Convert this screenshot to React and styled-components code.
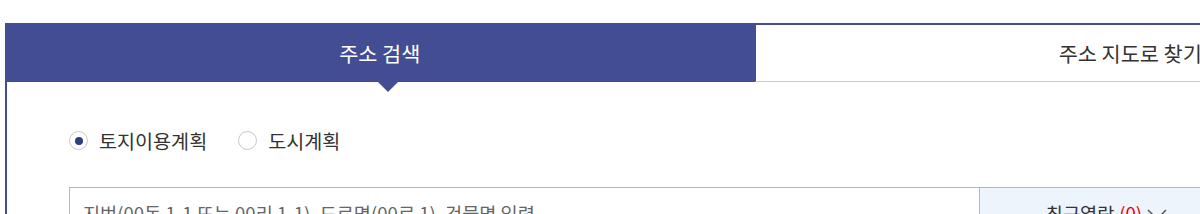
import styled, { createGlobalStyle } from "styled-components";

const GlobalStyle = createGlobalStyle`
	body {
		margin: 0;
		overflow: hidden;
		font-family: "Noto Sans CJK KR", "Noto Sans", sans-serif;
		color: #333;
		background: #fff;
	}
`;

const Page = styled.div`
	padding: 23px 0 0 5px;
`;

const Panel = styled.section`
	width: 1500px;
	border-top: 2px solid #434d93;
	border-left: 2px solid #434d93;
	box-sizing: border-box;
	height: 300px;
`;

const TabList = styled.ul`
	display: flex;
	margin: 0;
	padding: 0;
	list-style: none;
	margin-left: -2px;
`;

const Tab = styled.li`
	position: relative;
	flex: 1;
	height: 57px;
	display: flex;
	align-items: center;
	justify-content: center;
	font-size: 20.8px;
	box-sizing: border-box;
	background: ${(p) => (p.$active ? "#434d93" : "#fff")};
	color: ${(p) => (p.$active ? "#fff" : "#333")};
	border-bottom: 1px solid ${(p) => (p.$active ? "#434d93" : "#ccc")};
	border-left: ${(p) => (p.$active ? "none" : "1px solid #434d93")};

	${(p) =>
		p.$active &&
		`
		&::after {
			content: "";
			position: absolute;
			left: 50%;
			bottom: -11px;
			margin-left: -3px;
			border-left: 11px solid transparent;
			border-right: 11px solid transparent;
			border-top: 11px solid #434d93;
		}
	`}
`;

const Body = styled.div`
	padding: 44px 0 0 62px;
`;

const RadioGroup = styled.div`
	display: flex;
	gap: 31px;
	align-items: center;
`;

const RadioLabel = styled.label`
	display: flex;
	align-items: center;
	gap: 11px;
	font-size: 19.6px;
	color: #333;
`;

const RadioMark = styled.span`
	width: 19px;
	height: 19px;
	border-radius: 50%;
	border: 1px solid #c8c8c8;
	box-sizing: border-box;
	display: flex;
	align-items: center;
	justify-content: center;

	&::after {
		content: "";
		width: 8px;
		height: 8px;
		border-radius: 50%;
		background: ${(p) => (p.$checked ? "#2c3f7e" : "transparent")};
	}
`;

const SearchRow = styled.div`
	display: flex;
	margin-top: 32px;
	height: 52px;
	border: 1px solid #a9b9dc;
	width: 1200px;
	box-sizing: border-box;
`;

const SearchInput = styled.div`
	width: 910px;
	padding: 11px 0 0 13px;
	font-size: 18.6px;
	color: #666;
	box-sizing: border-box;
`;

const RecentButton = styled.div`
	flex: 1;
	background: #eef4fb;
	border-left: 1px solid #a9b9dc;
	display: flex;
	justify-content: center;
	align-items: flex-start;
	padding: 11px 35px 0 0;
	margin-left: -1px;
	font-size: 18.6px;
	color: #333;
	gap: 5px;
`;

const Count = styled.span`
	color: #e60012;
`;

const Chevron = () => (
	<svg width="20" height="12" viewBox="0 0 20 12" style={{ marginTop: 10 }}>
		<path d="M1 1 L10 10 L19 1" fill="none" stroke="#555" strokeWidth="1.5" />
	</svg>
);

export default function App() {
	return (
		<Page>
			<GlobalStyle />
			<Panel>
				<TabList>
					<Tab $active>주소 검색</Tab>
					<Tab>주소 지도로 찾기</Tab>
				</TabList>
				<Body>
					<RadioGroup>
						<RadioLabel>
							<RadioMark $checked />
							토지이용계획
						</RadioLabel>
						<RadioLabel>
							<RadioMark />
							도시계획
						</RadioLabel>
					</RadioGroup>
					<SearchRow>
						<SearchInput>지번(00동 1-1 또는 00리 1-1), 도로명(00로 1), 건물명 입력</SearchInput>
						<RecentButton>
							최근열람 <Count>(0)</Count>
							<Chevron />
						</RecentButton>
					</SearchRow>
				</Body>
			</Panel>
		</Page>
	);
}
